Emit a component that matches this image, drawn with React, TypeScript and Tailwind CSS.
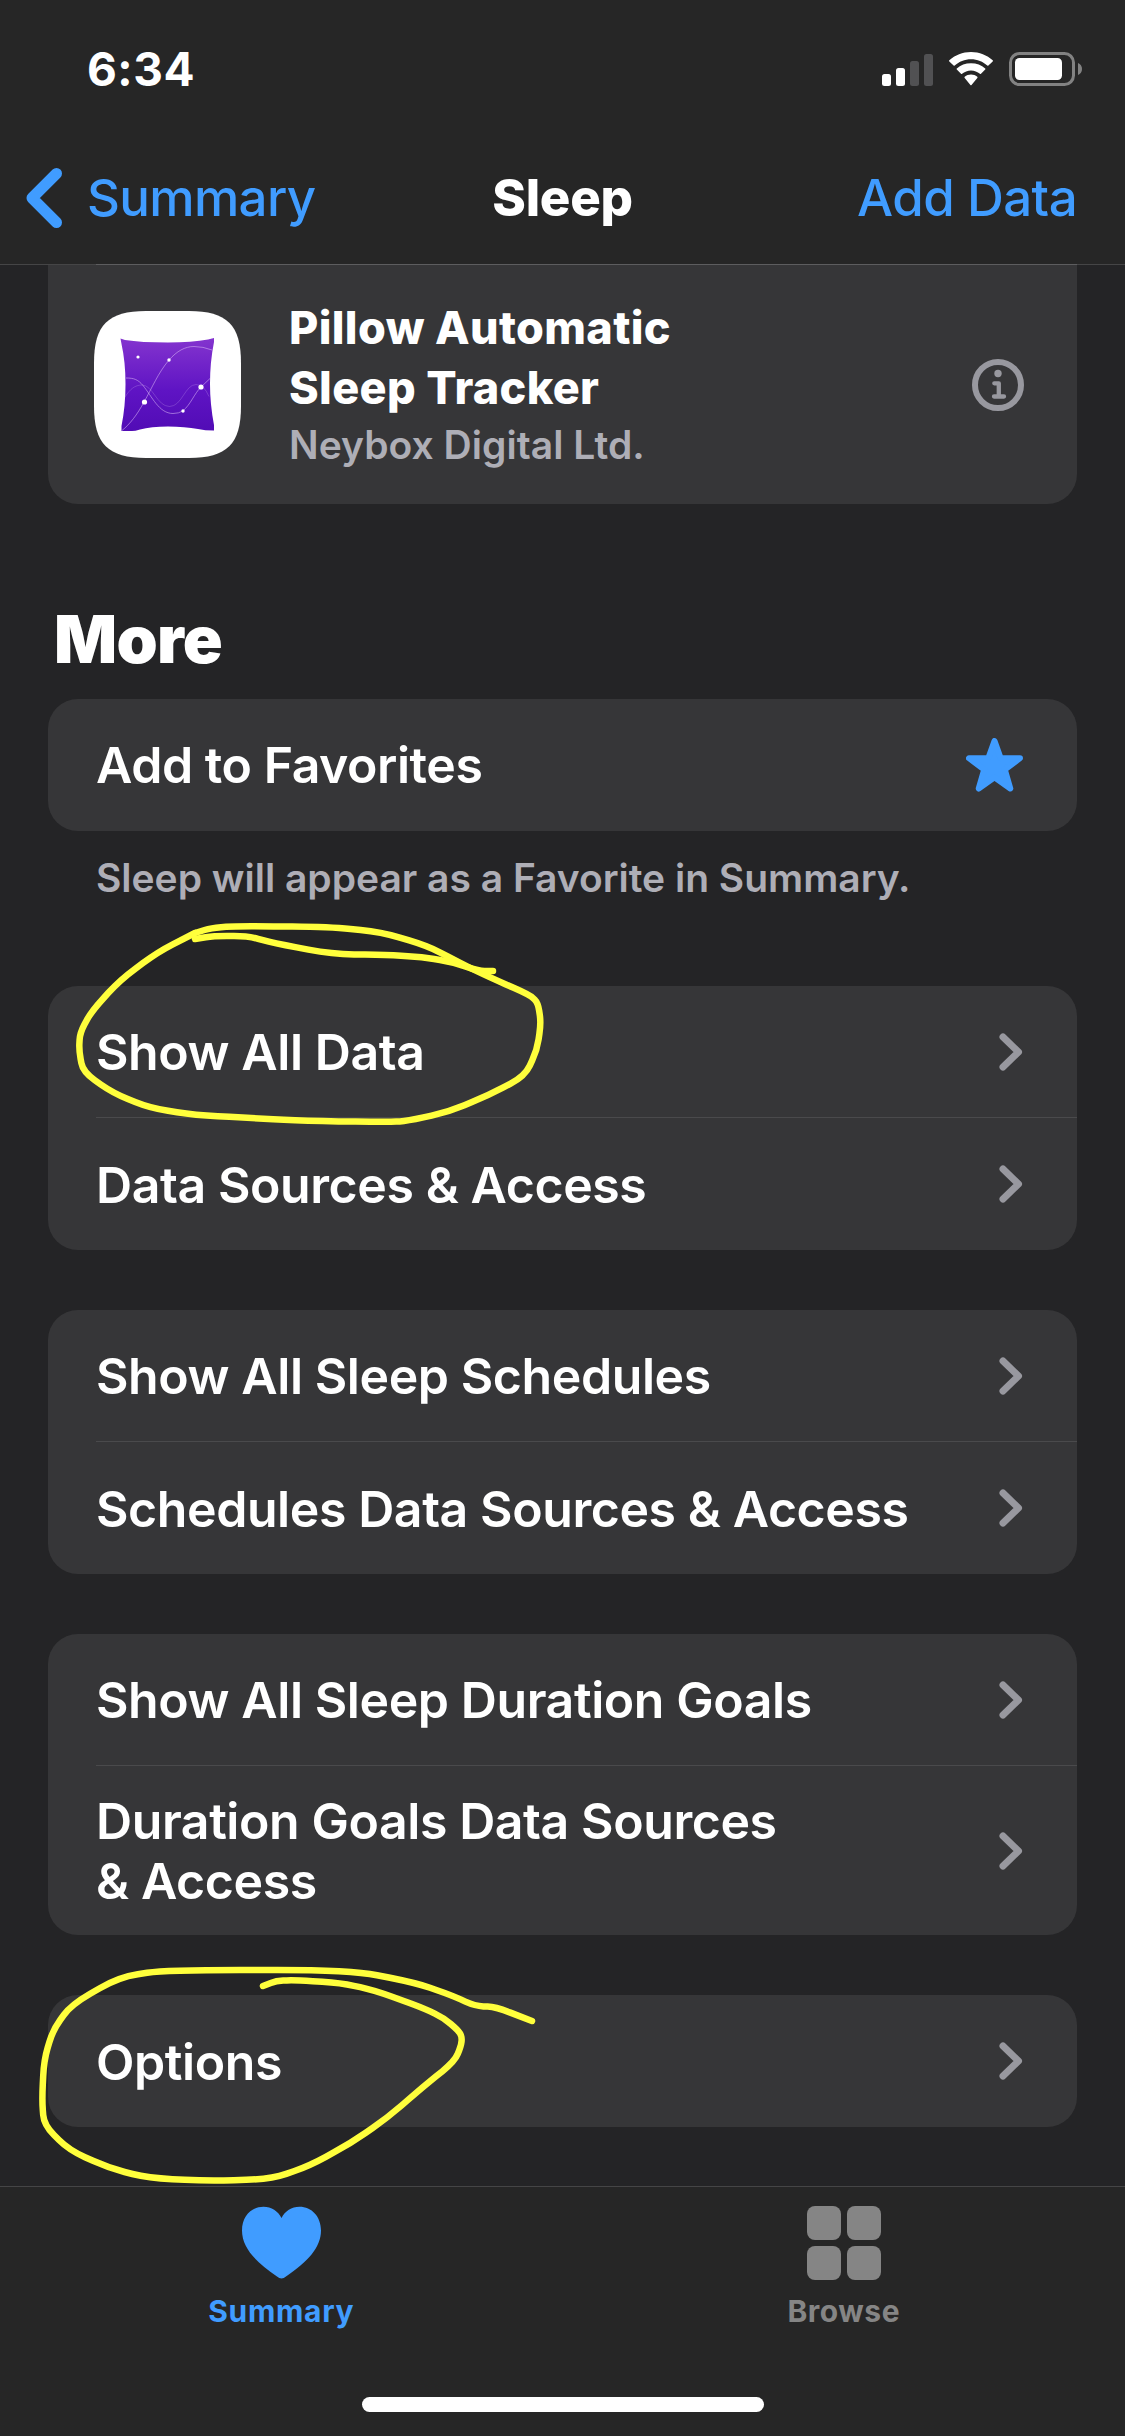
import { clsx } from "clsx"

type Point = [number, number]

const FIRST_MARK: Point[] = [
  [195, 939], [213, 936], [248, 936], [273, 943], [332, 954], [387, 955], [422, 957], [452, 962], [479, 971], [493, 971],
]

const FIRST_LOOP: Point[] = [
  [195, 933], [211, 928], [236, 926], [330, 927], [381, 932], [428, 946], [460, 963], [489, 977], [530, 995], [538, 1003],
  [541, 1023], [537, 1050], [525, 1076], [489, 1095], [448, 1112], [407, 1121], [389, 1122], [305, 1121], [252, 1118],
  [195, 1115], [150, 1108], [113, 1093], [83, 1072], [79, 1050], [80, 1033], [91, 1012], [120, 980], [158, 952], [195, 933],
]

const SECOND_LOOP: Point[] = [
  [263, 1986], [276, 1981], [294, 1980], [341, 1983], [373, 1990], [421, 2007], [444, 2018], [461, 2033], [462, 2043],
  [455, 2061], [423, 2087], [387, 2118], [351, 2143], [309, 2166], [271, 2179], [209, 2181], [148, 2178], [109, 2168],
  [69, 2150], [44, 2125], [42, 2100], [44, 2060], [53, 2030], [71, 2005], [119, 1977], [166, 1970], [351, 1970],
  [416, 1983], [451, 1995], [475, 2006], [496, 2007], [532, 2021],
]

// Joins the points with straight runs and rounds every corner
function toPath(points: Point[]) {
  let d = `M${points[0][0]} ${points[0][1]}`
  for (let i = 1; i < points.length - 1; i++) {
    const [px, py] = points[i - 1]
    const [x, y] = points[i]
    const [nx, ny] = points[i + 1]
    d += ` L${x + (px - x) * 0.4} ${y + (py - y) * 0.4} Q${x} ${y} ${x + (nx - x) * 0.4} ${y + (ny - y) * 0.4}`
  }
  const last = points[points.length - 1]
  return `${d} L${last[0]} ${last[1]}`
}

function StatusBar() {
  return (
    <div className="flex h-[138px] items-center justify-between pl-[87px] pr-[43px]">
      <span className="text-[46px] leading-none font-bold tracking-[0.5px]">6:34</span>
      <div className="flex items-center">
        {/* SIGNAL */}
        <svg width="51" height="33" viewBox="0 0 51 33">
          <rect x="0" y="21" width="9" height="12" rx="2.5" fill="#fff" />
          <rect x="14" y="15" width="9" height="18" rx="2.5" fill="#fff" />
          <rect x="28" y="8" width="9" height="25" rx="2.5" fill="#515153" />
          <rect x="42" y="1" width="9" height="32" rx="2.5" fill="#515153" />
        </svg>
        {/* WIFI */}
        <svg width="46" height="34" viewBox="0 0 46 34" className="ml-[15px]" fill="#fff">
          <path d="M23 7.2c6.300 0 12 2.400 16.300 6.400.3.300.8.300 1.100 0l4.300-4.200c.4-.4.4-.9 0-1.200C39 3.200 31.400 0 23 0S7 3.200 1.300 8.200c-.4.300-.4.800 0 1.200l4.300 4.200c.3.300.8.300 1.100 0C11 9.600 16.700 7.200 23 7.200z" />
          <path d="M23 18.400c3.400 0 6.500 1.300 8.900 3.400.3.300.8.300 1.100 0l4.200-4.200c.4-.4.4-.9 0-1.200C33.500 13.100 28.500 11.200 23 11.200s-10.500 1.900-14.200 5.200c-.4.300-.4.800 0 1.200L13 21.800c.3.300.8.300 1.100 0 2.400-2.100 5.500-3.400 8.900-3.400z" />
          <path d="M29.300 26c.4-.4.4-.9 0-1.200C27.600 23.300 25.400 22.500 23 22.500s-4.600.8-6.300 2.300c-.4.300-.4.800 0 1.200l5.700 7c.3.300.8.300 1.100 0z" />
        </svg>
        {/* BATTERY */}
        <svg width="73" height="34" viewBox="0 0 73 34" className="ml-[15px]">
          <rect x="1.500" y="1.500" width="63" height="31" rx="9" fill="none" stroke="#828282" strokeWidth="3" />
          <rect x="6" y="6" width="47" height="22" rx="4.500" fill="#fff" />
          <path d="M69 11c2.500 1 4 3.300 4 6s-1.500 5-4 6z" fill="#828282" />
        </svg>
      </div>
    </div>
  )
}

function NavBar() {
  return (
    <div className="grid h-[126px] grid-cols-3 items-center pb-[6px] text-[51px] leading-[60px] text-[#409cff]">
      <div className="flex items-center pl-[26px]">
        <svg width="36" height="60" viewBox="0 0 36 60" fill="none" stroke="currentColor" strokeWidth="11" strokeLinecap="round" strokeLinejoin="round">
          <path d="M30.500 5.500 6 30l24.500 24.500" />
        </svg>
        <span className="ml-[25px] font-medium tracking-[-0.650px]">Summary</span>
      </div>
      <span className="text-center font-extrabold tracking-[-0.300px] text-white">Sleep</span>
      <span className="pr-[48px] text-right font-medium tracking-[-0.600px]">Add Data</span>
    </div>
  )
}

function PillowIcon() {
  return (
    <svg width="147" height="147" viewBox="0 0 147 147">
      <defs>
        <linearGradient id="pillow" x1="0" y1="0" x2="0" y2="1">
          <stop offset="0" stopColor="#8636cf" />
          <stop offset="0.550" stopColor="#5f14c4" />
          <stop offset="1" stopColor="#500bb4" />
        </linearGradient>
        <clipPath id="pillowShape">
          <path d="M26.500 27.500 31 29q16 2.500 43 2.500 24 0 40-3l6-1.500v4q-4 20-4 42 0 20 4 41v5.500q-9 0-16-1.500-13-2.500-30-2.500-17 0-28 3-5 1.500-8 1.500H27.500v-5q4-20 4-42t-4-40z" />
        </clipPath>
      </defs>
      <path d="M0 52C0 14 14 0 52 0h43c38 0 52 14 52 52v43c0 38-14 52-52 52H52C14 147 0 133 0 95z" fill="#fff" />
      <g clipPath="url(#pillowShape)">
        <rect x="24" y="24" width="100" height="100" fill="url(#pillow)" />
        <g fill="none" stroke="#d9b8f5" strokeWidth="0.800">
          <path d="M28 119.500C36 113 43 104 50 91 58 77 64 62 75 49c8-9 16-13.500 25-13.500q9 0 18 3.500" opacity="0.700" />
          <path d="M32 67c8 0 12 1.500 17 7.500 9 11 16 28 30 28q6 0 10-2.700C97 93 100 83 107 76l9-8.500" opacity="0.700" />
          <path d="M31 86c5-8 10-12 17-12 11 0 15 21.500 27.500 21.500S91 73.500 102 73.500q8 0 13 12" opacity="0.300" />
        </g>
        <g fill="#fff">
          <circle cx="44" cy="46" r="1.600" />
          <circle cx="75" cy="49" r="1.700" />
          <circle cx="107" cy="76" r="2.600" />
          <circle cx="50.500" cy="91" r="2.600" />
          <circle cx="89" cy="100" r="1.700" />
        </g>
      </g>
    </svg>
  )
}

function Chevron() {
  return (
    <svg width="24" height="38" viewBox="0 0 24 38" fill="none" stroke="#98989f" strokeWidth="7" strokeLinecap="round" strokeLinejoin="round">
      <path d="M4 4l15.500 15L4 34" />
    </svg>
  )
}

function Card({ items }: { items: string[] }) {
  return (
    <div className="mb-[60px] rounded-[30px] bg-[#363638] pl-12">
      {items.map((item, i) => (
        <div
          key={item}
          className={clsx(
            "flex items-center justify-between pr-[54px]",
            item.includes("\n") ? "h-[169px]" : "h-[132px]",
            i < items.length - 1 && "border-b border-[#4a4a4c]"
          )}
        >
          <span className="pt-[1px] text-[50px] leading-[60px] font-semibold tracking-[-0.420px] whitespace-pre">{item}</span>
          <Chevron />
        </div>
      ))}
    </div>
  )
}

function TabBar() {
  return (
    <div className="h-[250px] border-t border-[#454546] bg-[#262626]">
      <div className="grid h-[143px] grid-cols-2 pt-[19px] text-[30px] leading-[36px] font-bold">
        <div className="flex flex-col items-center text-[#409cff]">
          <svg width="79" height="74" viewBox="0 0 79 74" fill="currentColor">
            <path d="M39.500 72.500c-1.500 0-3-1-4.500-2C13.500 56 0 41.500 0 24.500 0 10.500 9.300.7 21.500.7c8 0 14.500 4.300 18 11.300 3.500-7 10-11.300 18-11.300C69.700.7 79 10.500 79 24.500c0 17-13.500 31.500-35 46-1.500 1-3 2-4.500 2z" />
          </svg>
          <span className="mt-[13px] tracking-[0.700px]">Summary</span>
        </div>
        <div className="flex flex-col items-center text-[#858585]">
          <div className="grid grid-cols-2 gap-[6px]">
            {[0, 1, 2, 3].map((i) => (
              <div key={i} className="size-[34px] rounded-[8px] bg-[#858585]" />
            ))}
          </div>
          <span className="mt-[13px] tracking-[0.500px]">Browse</span>
        </div>
      </div>
      {/* HOME INDICATOR */}
      <div className="mx-auto mt-[67px] h-[15px] w-[402px] rounded-full bg-white" />
    </div>
  )
}

export default function App() {
  return (
    <div className="relative flex h-[2436px] w-[1125px] flex-col overflow-hidden bg-[#242426] font-['Inter',sans-serif] text-white">
      <header className="h-[264px] bg-[#262626]">
        <StatusBar />
        <NavBar />
      </header>

      <main className="h-[1922px] px-12">
        {/* SOURCE APP */}
        <div className="-mx-12 h-px bg-[#454546] pr-12 pl-24">
          <div className="h-px bg-[#5d5d5f]" />
        </div>
        <div className="flex h-[239px] items-center rounded-b-[30px] bg-[#363638] pr-[53px] pl-[46px]">
          <PillowIcon />
          <div className="ml-12 flex-1">
            <p className="text-[45px] leading-[60px] font-extrabold tracking-[0.350px] whitespace-pre">{"Pillow Automatic\nSleep Tracker"}</p>
            <p className="text-[39px] leading-[54px] font-semibold tracking-[0.040px] text-[#aeaeb6]">Neybox Digital Ltd.</p>
          </div>
          <svg width="52" height="52" viewBox="0 0 52 52" fill="none" stroke="#98989f" strokeLinecap="round" strokeLinejoin="round">
            <circle cx="26" cy="26" r="23" strokeWidth="6" />
            <circle cx="26" cy="14.500" r="3.700" fill="#98989f" stroke="none" />
            <path d="M22.300 24.300h4.500v13M22 37.500h10" strokeWidth="4.300" />
          </svg>
        </div>

        <h2 className="mt-[95px] mb-5 pl-[6px] text-[66px] leading-[80px] font-black tracking-[-0.700px]">More</h2>

        <div className="flex h-[132px] items-center justify-between rounded-[30px] bg-[#363638] pr-[54px] pl-12">
          <span className="text-[50px] leading-[60px] font-semibold tracking-[-0.450px]">Add to Favorites</span>
          <svg width="57" height="55" viewBox="0 0 57 55" fill="#409cff" stroke="#409cff" strokeWidth="6" strokeLinejoin="round">
            <path d="M28.500 3 34.700 20.200H54L38.800 31.500 44.300 50.500 28.500 39.300 12.700 50.500 18.200 31.500 3 20.200h19.300z" />
          </svg>
        </div>
        <p className="mt-5 mb-[81px] pl-12 text-[39px] leading-[54px] font-semibold tracking-[-0.010px] text-[#aeaeb6]">
          Sleep will appear as a Favorite in Summary.
        </p>

        <Card items={["Show All Data", "Data Sources & Access"]} />
        <Card items={["Show All Sleep Schedules", "Schedules Data Sources & Access"]} />
        <Card items={["Show All Sleep Duration Goals", "Duration Goals Data Sources\n& Access"]} />
        <Card items={["Options"]} />
      </main>

      <TabBar />

      {/* MARKER STROKES */}
      <svg className="pointer-events-none absolute inset-0" width="1125" height="2436" fill="none" stroke="#ffff3c" strokeWidth="6.500" strokeLinecap="round" strokeLinejoin="round">
        <path d={toPath(FIRST_MARK)} />
        <path d={toPath(FIRST_LOOP)} />
        <path d={toPath(SECOND_LOOP)} />
      </svg>
    </div>
  )
}
